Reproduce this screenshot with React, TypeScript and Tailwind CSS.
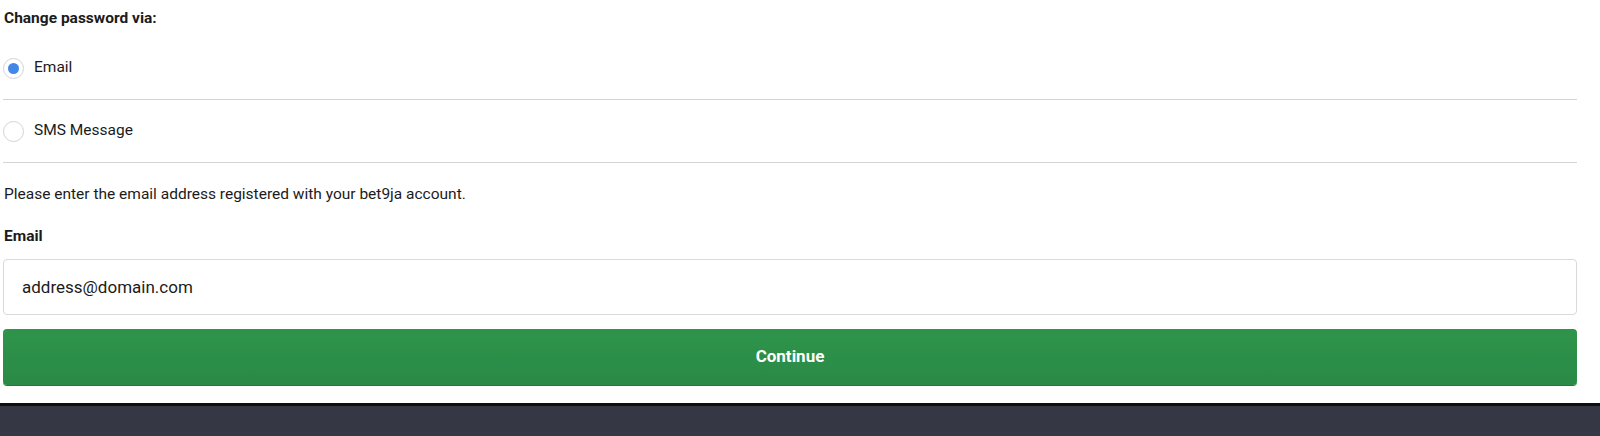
import { useState } from 'react'

type Channel = 'email' | 'sms'

const options: { id: Channel; label: string }[] = [
  { id: 'email', label: 'Email' },
  { id: 'sms', label: 'SMS Message' },
]

const Radio = ({ checked }: { checked: boolean }) => (
  <span className="flex h-[21px] w-[21px] shrink-0 items-center justify-center rounded-full border border-[#cfd3da] bg-white">
    {checked && <span className="h-[11px] w-[11px] rounded-full bg-[#4286e6]" />}
  </span>
)

export default function App() {
  const [channel, setChannel] = useState<Channel>('email')

  return (
    <div className="flex h-[436px] w-full flex-col bg-white font-['Roboto','Liberation_Sans',sans-serif] text-[#1b1b1b]">
      <div className="flex-1 pl-[3px] pr-[23px]">
        <div className="h-[37px] pl-[1px] pt-[8px] text-[15.5px] font-bold leading-5">Change password via:</div>

        {options.map((opt) => (
          <button
            key={opt.id}
            type="button"
            onClick={() => setChannel(opt.id)}
            className="flex h-[63px] w-full items-center gap-[10px] border-b border-[#d4d4d4] text-left text-[15.5px]"
          >
            <Radio checked={channel === opt.id} />
            <span>{opt.label}</span>
          </button>
        ))}

        <p className="mt-[21px] pl-[1px] text-[15.5px] leading-5">
          Please enter the email address registered with your bet9ja account.
        </p>

        <div className="mt-[22px] pl-[1px] text-[15.5px] font-bold leading-5">Email</div>

        <input
          className="mt-[13px] block h-[56px] w-full rounded-[4px] border border-[#d9d9d9] bg-white px-[18px] text-[17px] text-[#1b1b1b] outline-none"
          defaultValue="address@domain.com"
        />

        <button
          type="button"
          className="mt-[14px] h-[56px] w-full rounded-[4px] bg-gradient-to-b from-[#2e944b] to-[#2a8a46] text-[17px] font-bold text-white shadow-[0_1px_0_#237a3c]"
        >
          Continue
        </button>
      </div>

      <div className="h-[33px] border-t-[3px] border-[#0e0e10] bg-[#363744]" />
    </div>
  )
}
